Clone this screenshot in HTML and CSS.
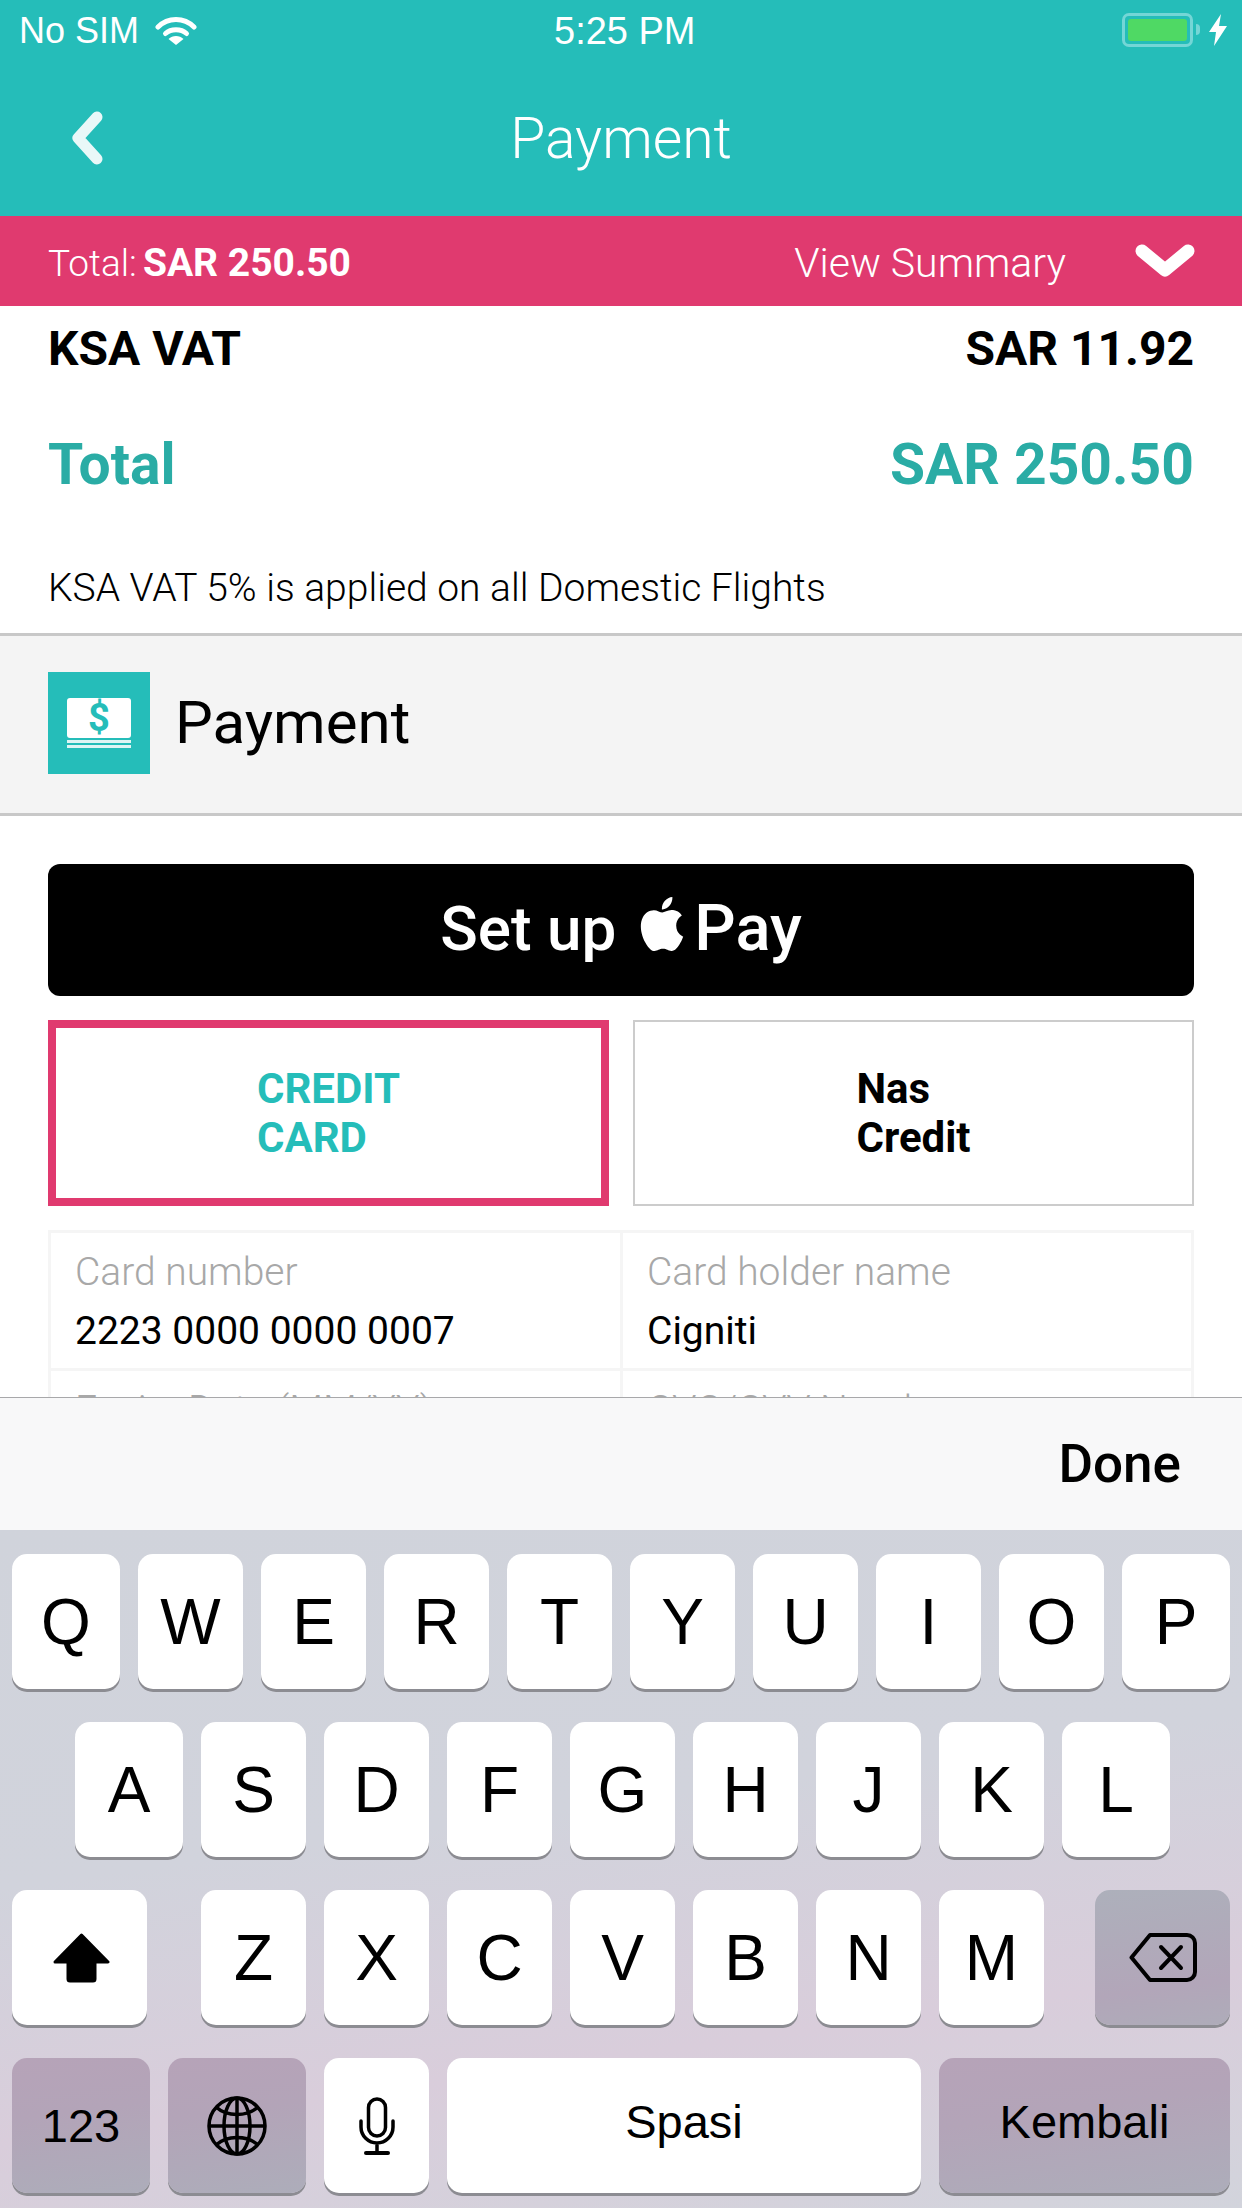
FILE: index.html
```html
<!DOCTYPE html>
<html lang="en">
<head>
  <meta charset="UTF-8">
  <title>Payment</title>
  <link rel="stylesheet" href="styles.css">
</head>
<body>
  <div class="screen">
    <div class="topbar">
      <div class="status">
        <div class="status-left">
          <span>No SIM</span>
          <svg class="wifi" width="42" height="30" viewBox="0 0 42 30">
            <path d="M3 11 C13 1 29 1 39 11" fill="none" stroke="#fff" stroke-width="5" stroke-linecap="round"/>
            <path d="M10.5 17.5 C16 12.5 26 12.5 31.5 17.5" fill="none" stroke="#fff" stroke-width="5" stroke-linecap="round"/>
            <path d="M13.5 24 C17.5 20 24.5 20 28.5 24 L21 30 Z" fill="#fff" transform="translate(0 -1)"/>
          </svg>
        </div>
        <span class="time">5:25 PM</span>
        <div class="status-right">
          <div class="battery"><div class="battery-fill"></div></div>
          <div class="battery-nub"></div>
          <svg class="bolt" width="18" height="32" viewBox="0 0 18 32">
            <path d="M12 0 L0 18 H7 L5 32 L18 12 H10 Z" fill="#fff"/>
          </svg>
        </div>
      </div>
      <div class="nav">
        <svg width="36" height="54" viewBox="0 0 36 54">
          <path d="M27 6 L8 27 L27 48" fill="none" stroke="#e9f8f8" stroke-width="11" stroke-linecap="round" stroke-linejoin="round"/>
        </svg>
        <span class="nav-title">Payment</span>
      </div>
    </div>

    <div class="summary-bar">
      <div class="summary-total"><span>Total:</span> <b>SAR 250.50</b></div>
      <div class="summary-link">
        <span>View Summary</span>
        <svg width="60" height="34" viewBox="0 0 60 34">
          <path d="M7 7 L30 26 L53 7" fill="none" stroke="#fff" stroke-width="13" stroke-linecap="round" stroke-linejoin="round"/>
        </svg>
      </div>
    </div>

    <div class="content">
      <div class="price-row vat-row"><span>KSA VAT</span><span>SAR 11.92</span></div>
      <div class="price-row total-row"><span>Total</span><span>SAR 250.50</span></div>
      <p class="vat-note">KSA VAT 5% is applied on all Domestic Flights</p>

      <div class="section-head">
        <div class="section-icon">
          <div class="money-card">$</div>
          <div class="money-stripe"></div>
          <div class="money-stripe"></div>
        </div>
        <span class="section-title">Payment</span>
      </div>

      <div class="pay-area">
        <div class="apple-btn">
          <span>Set up</span>
          <svg class="apple-logo" width="52" height="54" viewBox="0 0 24 24" preserveAspectRatio="none">
            <path fill="#fff" d="M12.152 6.896c-.948 0-2.415-1.078-3.96-1.04-2.04.027-3.91 1.183-4.961 3.014-2.117 3.675-.546 9.103 1.519 12.09 1.013 1.454 2.208 3.09 3.792 3.039 1.52-.065 2.09-.987 3.935-.987 1.831 0 2.35.987 3.96.948 1.637-.026 2.676-1.48 3.676-2.948 1.156-1.688 1.636-3.325 1.662-3.415-.039-.013-3.182-1.221-3.22-4.857-.026-3.04 2.48-4.494 2.597-4.559-1.429-2.09-3.623-2.324-4.39-2.376-2-.156-3.675 1.09-4.61 1.09zM15.53 3.83c.843-1.012 1.4-2.427 1.245-3.83-1.207.052-2.662.805-3.532 1.818-.78.896-1.454 2.338-1.273 3.714 1.338.104 2.715-.688 3.559-1.701"/>
          </svg>
          <span class="apple-pay">Pay</span>
        </div>

        <div class="tabs">
          <div class="tab tab-active"><span>CREDIT<br>CARD</span></div>
          <div class="tab"><span>Nas<br>Credit</span></div>
        </div>

        <div class="card-form">
          <div class="cell">
            <div class="cell-label">Card number</div>
            <div class="cell-value">2223 0000 0000 0007</div>
          </div>
          <div class="cell">
            <div class="cell-label">Card holder name</div>
            <div class="cell-value">Cigniti</div>
          </div>
          <div class="cell">
            <div class="cell-label">Expiry Date (MM/YY)</div>
          </div>
          <div class="cell">
            <div class="cell-label">CVC/CVV Number</div>
          </div>
        </div>
      </div>
    </div>

    <div class="toolbar"><span>Done</span></div>

    <div class="keyboard">
      <div class="key-row">
        <div class="key wide">Q</div><div class="key">W</div><div class="key">E</div><div class="key">R</div><div class="key">T</div><div class="key">Y</div><div class="key">U</div><div class="key">I</div><div class="key">O</div><div class="key wide">P</div>
      </div>
      <div class="key-row row-home">
        <div class="key wide">A</div><div class="key">S</div><div class="key">D</div><div class="key">F</div><div class="key">G</div><div class="key">H</div><div class="key">J</div><div class="key">K</div><div class="key wide">L</div>
      </div>
      <div class="key-row">
        <div class="key shift">
          <svg class="shift-icon" width="57" height="50" viewBox="0 0 57 50">
            <path d="M28.5 2 L55 29 H42 V46 a2 2 0 0 1 -2 2 H17 a2 2 0 0 1 -2 -2 V29 H2 Z" fill="#000" stroke="#000" stroke-width="3" stroke-linejoin="round"/>
          </svg>
        </div>
        <div class="key-group">
          <div class="key">Z</div><div class="key">X</div><div class="key">C</div><div class="key">V</div><div class="key">B</div><div class="key">N</div><div class="key">M</div>
        </div>
        <div class="key shift key-delete">
          <svg width="68" height="49" viewBox="0 0 68 49">
            <path d="M21 2 H58 a8 8 0 0 1 8 8 V39 a8 8 0 0 1 -8 8 H21 L2.5 24.5 Z" fill="none" stroke="#000" stroke-width="4" stroke-linejoin="round"/>
            <path d="M32 14 L52 35 M52 14 L32 35" fill="none" stroke="#000" stroke-width="4" stroke-linecap="round"/>
          </svg>
        </div>
      </div>
      <div class="key-row">
        <div class="key key-dark fn small-text">123</div>
        <div class="key key-dark fn">
          <svg width="60" height="60" viewBox="0 0 60 60" fill="none" stroke="#000" stroke-width="3.5">
            <ellipse cx="30" cy="30" rx="28" ry="28"/>
            <ellipse cx="30" cy="30" rx="13" ry="28"/>
            <path d="M30 2 V58 M2 30 H58"/>
            <path d="M9 11 C20 21 40 21 51 11 M9 49 C20 39 40 39 51 49"/>
          </svg>
        </div>
        <div class="key">
          <svg width="36" height="58" viewBox="0 0 36 58" fill="none" stroke="#000" stroke-width="3.5">
            <rect x="9.5" y="2" width="17" height="37" rx="8.5"/>
            <path d="M2 24 V30 a16 16 0 0 0 32 0 V24 M18 46 V55" stroke-linecap="round"/>
            <path d="M7 56 H29" stroke-width="4" stroke-linecap="round"/>
          </svg>
        </div>
        <div class="key space small-text"><span>Spasi</span></div>
        <div class="key key-dark return small-text"><span>Kembali</span></div>
      </div>
    </div>
  </div>
</body>
</html>
```

FILE: styles.css
```css
* {
  box-sizing: border-box;
}

html, body {
  margin: 0;
  padding: 0;
}

body {
  font-family: Roboto, "Liberation Sans", sans-serif;
  color: #000;
  background: #fff;
}

.screen {
  width: 1242px;
  height: 2208px;
  overflow: hidden;
  display: flex;
  flex-direction: column;
}

/* top teal area */
.topbar {
  height: 216px;
  background-color: #25bdb9;
  color: #fff;
}

.status {
  height: 62px;
  display: grid;
  grid-template-columns: 535px auto 1fr;
  align-items: center;
  padding-left: 19px;
  font-family: "Liberation Sans", sans-serif;
  font-size: 36px;
}

.status-left {
  display: flex;
  align-items: center;
  gap: 16px;
}

.time {
  font-size: 38px;
}

.status-right {
  display: flex;
  align-items: center;
  justify-content: flex-end;
  padding-right: 15px;
  margin-bottom: 3px;
}

.battery {
  width: 71px;
  height: 34px;
  border: 3px solid #74d6d6;
  border-radius: 7px;
  padding: 3px;
}

.battery-fill {
  height: 100%;
  background-color: #4fd964;
  border-radius: 3px;
}

.battery-nub {
  width: 4px;
  height: 11px;
  margin-left: 3px;
  margin-right: 9px;
  background-color: #74d6d6;
  border-radius: 0 4px 4px 0;
}

.nav {
  height: 152px;
  display: grid;
  grid-template-columns: 1fr auto 1fr;
  align-items: center;
  padding-left: 70px;
}

.nav-title {
  font-size: 57px;
  font-weight: 300;
  margin-left: -70px;
}

/* pink total bar */
.summary-bar {
  height: 90px;
  background-color: #e03a6f;
  color: #fff;
  display: flex;
  align-items: center;
  justify-content: space-between;
  padding: 0 47px 0 48px;
}

.summary-total {
  margin-top: 3px;
  font-size: 37px;
  font-weight: 300;
  word-spacing: -3px;
}

.summary-total b {
  font-size: 39px;
  font-weight: 700;
  word-spacing: 0;
}

.summary-link {
  display: flex;
  align-items: center;
  gap: 69px;
  font-size: 41px;
  font-weight: 300;
}

.summary-link span {
  margin-top: 3px;
}

.content {
  height: 1091px;
  overflow: hidden;
}

.price-row {
  display: flex;
  justify-content: space-between;
  padding: 0 48px;
  font-weight: 700;
}

.vat-row {
  height: 80px;
  padding-top: 3px;
  line-height: 80px;
  font-size: 48px;
}

.total-row {
  margin-top: 39px;
  height: 80px;
  line-height: 80px;
  font-size: 57px;
  color: #2aaca5;
}

.vat-note {
  margin: 58px 0 20px;
  padding: 0 48px;
  font-size: 39px;
  font-weight: 300;
  line-height: 50px;
}

.section-head {
  height: 183px;
  background-color: #f4f4f4;
  border-top: 3px solid #c8c8c8;
  border-bottom: 3px solid #c8c8c8;
  display: flex;
  align-items: center;
  padding: 0 48px 3px;
  gap: 25px;
}

.section-icon {
  width: 102px;
  height: 102px;
  background-color: #25bdb9;
  display: flex;
  flex-direction: column;
  align-items: center;
  justify-content: center;
  gap: 2px;
}

.money-card {
  width: 64px;
  height: 40px;
  background-color: #fff;
  border-radius: 3px;
  color: #25bdb9;
  font-size: 38px;
  font-weight: 700;
  line-height: 40px;
  text-align: center;
}

.money-stripe {
  width: 64px;
  height: 3px;
  background-color: #dff5f4;
}

.section-title {
  font-size: 60px;
  margin-bottom: 1px;
}

.pay-area {
  padding: 48px 48px 0;
}

.apple-btn {
  height: 132px;
  background-color: #000;
  border-radius: 12px;
  color: #fff;
  display: flex;
  align-items: center;
  justify-content: center;
  font-size: 62px;
  font-weight: 500;
  padding-bottom: 4px;
}

.apple-logo {
  margin: -8px 6px 0 20px;
}

.apple-pay {
  font-size: 65px;
}

.tabs {
  display: grid;
  grid-template-columns: 561px 561px;
  gap: 24px;
  margin-top: 24px;
}

.tab {
  height: 186px;
  border: 2px solid #ccc;
  display: flex;
  align-items: center;
  justify-content: center;
  font-size: 42px;
  font-weight: 700;
  line-height: 49px;
}

.tab-active {
  border: 8px solid #e03a6f;
  color: #25bdb9;
}

.card-form {
  display: grid;
  grid-template-columns: 572px 1fr;
  margin-top: 24px;
  border: 3px solid #f5f5f5;
}

.cell {
  height: 138px;
  padding: 15px 24px 0;
  border-bottom: 3px solid #f5f5f5;
}

.cell:nth-child(odd) {
  border-right: 3px solid #f5f5f5;
}

.cell-label {
  font-size: 39px;
  font-weight: 300;
  line-height: 48px;
  color: #a8a8a8;
}

.cell-value {
  margin-top: 11px;
  font-size: 39px;
  line-height: 48px;
}

/* keyboard */
.toolbar {
  height: 133px;
  background-color: #f8f8f9;
  border-top: 1px solid #a8a8aa;
  display: flex;
  align-items: center;
  justify-content: flex-end;
  padding-right: 61px;
  font-size: 53px;
  font-weight: 500;
}

.keyboard {
  flex: 1;
  padding: 24px 12px 0;
  display: flex;
  flex-direction: column;
  gap: 33px;
  font-family: "Liberation Sans", sans-serif;
  background: linear-gradient(172deg, #d0d3db 0%, #d1d3dc 42%, #d9cddb 72%, #d2d4dc 100%);
}

.key-row {
  display: flex;
  gap: 18px;
}

.row-home {
  padding-left: 63px;
}

.key-group {
  display: flex;
  gap: 18px;
  margin-left: 36px;
}

.key {
  width: 105px;
  height: 135px;
  flex: none;
  background-color: #fff;
  border-radius: 15px;
  box-shadow: 0 3px 0 #8c8c92;
  display: flex;
  align-items: center;
  justify-content: center;
  font-size: 64px;
}

.wide {
  width: 108px;
}

.shift {
  width: 135px;
}

.shift-icon {
  margin-left: 3px;
}

.key-delete {
  margin-left: auto;
  background: linear-gradient(172deg, #adb0bb 0%, #b2a6b9 70%, #aeacb9 100%);
}

.key-dark {
  background: linear-gradient(172deg, #b6a3b8 0%, #b3a4b8 40%, #adadba 100%);
}

.fn {
  width: 138px;
}

.small-text {
  font-size: 47px;
}

.space {
  width: 474px;
}

.return {
  width: 291px;
}

.space span, .return span {
  margin-bottom: 8px;
}
```
